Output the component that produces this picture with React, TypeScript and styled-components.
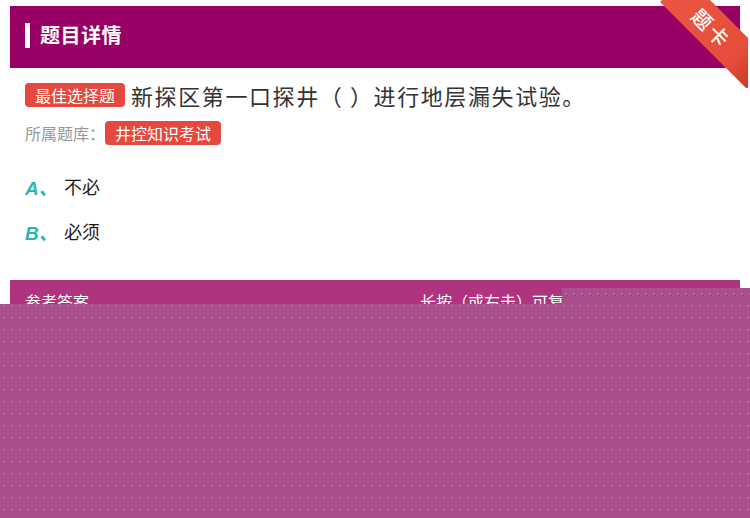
import React from "react";
import styled, { createGlobalStyle } from "styled-components";

const GlobalStyle = createGlobalStyle`
  html, body {
    margin: 0;
    padding: 0;
    background: #ffffff;
  }
  body {
    font-family: "Noto Sans CJK SC", "Noto Sans", "Liberation Sans", sans-serif;
  }
  * { box-sizing: border-box; }
`;

const Page = styled.div`
  position: relative;
  width: 750px;
  height: 518px;
  overflow: hidden;
  padding: 6px 10px 0;
  background: #ffffff;
`;

const Card = styled.div`
  display: flex;
  flex-direction: column;
  background: #ffffff;
`;

const Header = styled.div`
  height: 62px;
  background: #990066;
  display: flex;
  align-items: center;
  gap: 10px;
  padding: 0 0 4px 15px;
`;

const HeaderMark = styled.span`
  width: 5px;
  height: 25px;
  background: #ffffff;
`;

const HeaderTitle = styled.h1`
  margin: 0;
  font-size: 20px;
  font-weight: 700;
  line-height: 24px;
  color: #ffffff;
  letter-spacing: 0.5px;
`;

const Body = styled.div`
  display: flex;
  flex-direction: column;
  padding: 15px 15px 0;
`;

const Row = styled.div<{ $top: number }>`
  display: flex;
  align-items: center;
  margin-top: ${(p) => p.$top}px;
  height: 24px;
`;

const Tag = styled.span`
  display: inline-flex;
  align-items: center;
  height: 24px;
  padding: 0 10px;
  border-radius: 4px;
  background: #e5483e;
  color: #ffffff;
  font-size: 16px;
  line-height: 24px;
  white-space: nowrap;
`;

const QuestionText = styled.span`
  margin-left: 6px;
  font-size: 22px;
  line-height: 24px;
  letter-spacing: 1.6px;
  color: #333333;
  white-space: nowrap;
`;

const MetaLabel = styled.span`
  font-size: 16px;
  line-height: 24px;
  color: #999999;
  white-space: nowrap;
`;

const OptionList = styled.div`
  display: flex;
  flex-direction: column;
  gap: 15px;
  margin-top: 26px;
`;

const Option = styled.div`
  display: flex;
  align-items: center;
  height: 30px;
`;

const OptionKey = styled.span`
  width: 39px;
  font-family: "Liberation Sans", "Noto Sans CJK SC", sans-serif;
  font-size: 19px;
  font-weight: 700;
  font-style: italic;
  color: #2bb6b0;
  white-space: nowrap;
`;

const OptionText = styled.span`
  font-size: 18px;
  color: #1a1a1a;
`;

const AnswerBar = styled.div`
  display: grid;
  grid-template-columns: 395px 1fr;
  margin-top: 34px;
  height: 60px;
  padding: 12px 15px 0;
  background: #b03380;
  color: #ffffff;
  font-size: 16px;
  line-height: 18px;
  white-space: nowrap;
`;

const Ribbon = styled.svg`
  position: absolute;
  top: 0;
  right: 0;
  width: 94px;
  height: 92px;
`;

/* Translucent dotted veil laid over the answer area */
const Veil = styled.div`
  position: absolute;
  background-color: #a94f8c;
  background-image: radial-gradient(
      circle at 2px 2px,
      rgba(206, 128, 186, 0.55) 0.7px,
      transparent 1.2px
    ),
    radial-gradient(circle at 3px 3px, rgba(120, 40, 95, 0.35) 0.6px, transparent 1.1px);
  background-size: 8px 12px;
`;

const VeilTop = styled(Veil)`
  left: 562px;
  right: 0;
  top: 288px;
  height: 16px;
  background-position: 2px 4px;
`;

const VeilMain = styled(Veil)`
  left: 0;
  right: 0;
  top: 304px;
  bottom: 0;
  background-position: 2px 0;
`;

const options = [
  { key: "A、", text: "不必" },
  { key: "B、", text: "必须" },
];

export default function App() {
  return (
    <>
      <GlobalStyle />
      <Page>
        <Card>
          <Header>
            <HeaderMark />
            <HeaderTitle>题目详情</HeaderTitle>
          </Header>
          <Body>
            <Row $top={0}>
              <Tag>最佳选择题</Tag>
              <QuestionText>新探区第一口探井（ ）进行地层漏失试验。</QuestionText>
            </Row>
            <Row $top={14}>
              <MetaLabel>所属题库：</MetaLabel>
              <Tag>井控知识考试</Tag>
            </Row>
            <OptionList>
              {options.map((o) => (
                <Option key={o.key}>
                  <OptionKey>{o.key}</OptionKey>
                  <OptionText>{o.text}</OptionText>
                </Option>
              ))}
            </OptionList>
          </Body>
          <AnswerBar>
            <span>参考答案</span>
            <span>长按（或右击）可复制</span>
          </AnswerBar>
        </Card>

        <Ribbon viewBox="0 0 94 92">
          <defs>
            <linearGradient id="ribbonFill" x1="0" y1="0" x2="1" y2="1">
              <stop offset="0" stopColor="#ea5642" />
              <stop offset="0.75" stopColor="#e64d3b" />
              <stop offset="1" stopColor="#c93a2b" />
            </linearGradient>
          </defs>
          <path
            d="M8,0 L54,0 L92,38 L92,86 Q92,90 89,87 L5,3 Q3,0 8,0 Z"
            fill="url(#ribbonFill)"
          />
          <text
            x="56"
            y="28"
            transform="rotate(45 56 28)"
            textAnchor="middle"
            dominantBaseline="central"
            fill="#ffffff"
            fontSize="20"
            fontWeight="500"
            letterSpacing="3"
            fontFamily="Noto Sans CJK SC, sans-serif"
          >
            题卡
          </text>
        </Ribbon>

        <VeilTop />
        <VeilMain />
      </Page>
    </>
  );
}
